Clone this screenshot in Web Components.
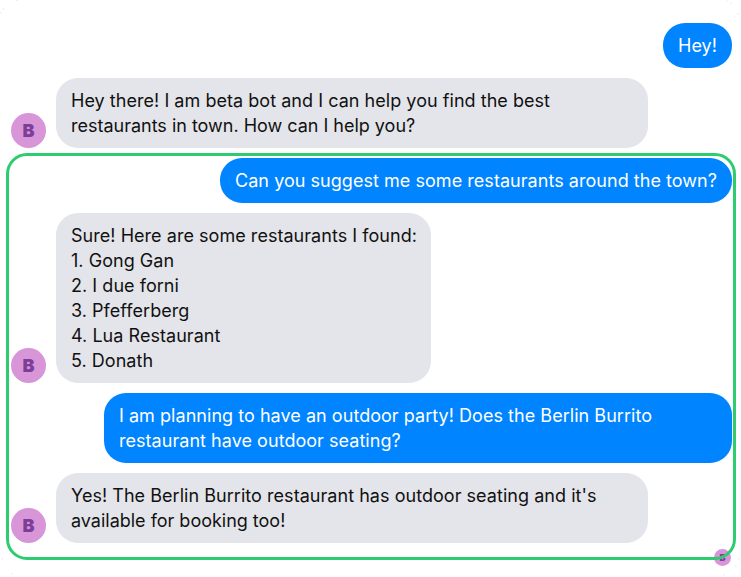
<!DOCTYPE html>
<html><head><meta charset="utf-8"><style>
html,body{margin:0;padding:0;background:#fff}
body{font-family:Inter,"Liberation Sans",sans-serif}
.tight{letter-spacing:-.01px}
</style></head><body>
<chat-app>
  <chat-message from="user">Hey!</chat-message>
  <chat-message from="bot" style="--bw:592px">Hey there! I am beta bot and I can help you find the best<br><span class="tight">restaurants in town. How can I help you?</span></chat-message>
  <chat-group>
    <chat-message from="user">Can you suggest me some restaurants around the town?</chat-message>
    <chat-message from="bot" style="--bw:375px">Sure! Here are some restaurants I found:<br>1. Gong Gan<br>2. I due forni<br>3. Pfefferberg<br>4. Lua Restaurant<br>5. Donath</chat-message>
    <chat-message from="user" style="--bw:628px">I am planning to have an outdoor party! Does the Berlin Burrito<br>restaurant have outdoor seating?</chat-message>
    <chat-message from="bot" style="--bw:592px">Yes! The Berlin Burrito restaurant has outdoor seating and it's<br><span class="tight">available for booking too!</span></chat-message>
  </chat-group>
</chat-app>
<script>
class BotAvatar extends HTMLElement{
  constructor(){super();const s=this.attachShadow({mode:'open'});
  s.innerHTML=`<style>:host{display:flex;align-items:center;justify-content:center;box-sizing:border-box;width:var(--size,35px);height:var(--size,35px);border-radius:50%;background:#d896d8;color:#7b3f98;font:900 var(--glyph,18px)/1 Inter,"Liberation Sans",sans-serif;flex:none}</style><span>B</span>`}
}
customElements.define('bot-avatar',BotAvatar);
class ChatMessage extends HTMLElement{
  constructor(){super();const s=this.attachShadow({mode:'open'});
  const bot=this.getAttribute('from')==='bot';
  s.innerHTML=`<style>
  :host{display:flex;align-items:flex-end;gap:10px;justify-content:${bot?'flex-start':'flex-end'}}
  .b{width:var(--bw,auto);padding:10px 15px;border-radius:22px;font-size:18px;line-height:25px;letter-spacing:.04px;white-space:nowrap;box-sizing:border-box;background:${bot?'#e4e5ea':'#0084ff'};color:${bot?'#111':'#fff'}}
  </style>${bot?'<bot-avatar></bot-avatar>':''}<div class="b" part="bubble"><slot></slot></div>`}
}
customElements.define('chat-message',ChatMessage);
class ChatGroup extends HTMLElement{
  constructor(){super();const s=this.attachShadow({mode:'open'});
  s.innerHTML=`<style>
  :host{display:flex;flex-direction:column;gap:10px;position:relative;box-sizing:border-box;margin:-5px -4px 0 -5px;padding:2px 1px 14px 2px;border:3px solid #2ecc71;border-radius:21px}
  .mini{position:absolute;right:2px;bottom:-9px;--size:17px;--glyph:9px;z-index:-1}
  </style><slot></slot><bot-avatar class="mini"></bot-avatar>`}
}
customElements.define('chat-group',ChatGroup);
class ChatApp extends HTMLElement{
  constructor(){super();const s=this.attachShadow({mode:'open'});
  s.innerHTML=`<style>:host{display:flex;flex-direction:column;gap:10px;position:relative;box-sizing:border-box;width:741px;height:577px;padding:23px 9px 0 11px;overflow:hidden;isolation:isolate}
  svg{position:absolute;inset:0;pointer-events:none}circle{fill:#e6e6e6}</style><slot></slot>
  <svg width="741" height="577" aria-hidden="true"><circle cx="3.5" cy="9" r=".7"/><circle cx="1" cy="13" r=".7"/><circle cx="17" cy=".5" r=".7"/><circle cx="727" cy="1" r=".7"/><circle cx="731" cy="3" r=".7"/><circle cx="738" cy="14" r=".7"/><circle cx="739" cy="559" r=".7"/><circle cx="736" cy="566" r=".7"/><circle cx="724" cy="575" r=".7"/><circle cx="2" cy="559" r=".7"/><circle cx="12" cy="574" r=".7"/></svg>`}
}
customElements.define('chat-app',ChatApp);
</script>
</body></html>
